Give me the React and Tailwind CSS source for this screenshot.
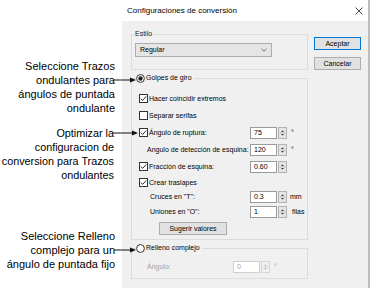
import React from 'react';

function Arrow({ x, y, w }) {
  return (
    <svg className="absolute" style={{ left: x, top: y - 4 }} width={w} height="8" viewBox={`0 0 ${w} 8`}>
      <line x1="0" y1="4" x2={w - 4} y2="4" stroke="#111" strokeWidth="1" />
      <polygon points={`${w - 6},1.5 ${w},4 ${w - 6},6.5`} fill="#111" />
    </svg>
  );
}

function Check({ checked }) {
  return (
    <svg width="9" height="9" viewBox="0 0 9 9" className="shrink-0">
      <rect x="0.5" y="0.5" width="8" height="8" fill="#fff" stroke="#333" />
      {checked && <polyline points="1.8,4.6 3.6,6.4 7.2,2.5" fill="none" stroke="#222" strokeWidth="1" />}
    </svg>
  );
}

function Radio({ checked }) {
  return (
    <svg width="9" height="9" viewBox="0 0 9 9" className="shrink-0">
      <circle cx="4.5" cy="4.5" r="3.9" fill="#fff" stroke="#333" />
      {checked && <circle cx="4.5" cy="4.5" r="2.2" fill="#222" />}
    </svg>
  );
}

function Spin({ value, disabled }) {
  return (
    <div className="flex h-[12px]">
      <div className={`w-[27px] h-[12px] bg-white border pl-[3px] flex items-center ${disabled ? 'border-[#cfcfcf] text-[#a0a0a0]' : 'border-[#9a9a9a] text-black'}`}>
        {value}
      </div>
      <div className={`ml-[1px] w-[9px] h-[12px] border ${disabled ? 'border-[#d6d6d6] bg-[#f0f0f0]' : 'border-[#b4b4b4] bg-[#e6e6e6]'}`}>
        <svg width="7" height="10" viewBox="0 0 7 10">
          <polygon points="2,4 3.5,2.5 5,4" fill={disabled ? '#b0b0b0' : '#333'} />
          <line x1="0" y1="5" x2="7" y2="5" stroke={disabled ? '#dcdcdc' : '#c4c4c4'} />
          <polygon points="2,6 3.5,7.5 5,6" fill={disabled ? '#b0b0b0' : '#333'} />
        </svg>
      </div>
    </div>
  );
}

export default function App() {
  return (
    <div className="relative w-[386px] h-[305px] bg-white overflow-hidden font-['Liberation_Sans',Arial,sans-serif] text-black">
      {/* dialog */}
      <div className="ml-[122px] w-[248px] flex flex-col border-r-2 border-[#bdbdbd]">
        <div className="h-[21px] bg-white flex items-center justify-between pl-[5px] pr-[5px] text-[8px]">
          <span>Configuraciones de conversión</span>
          <svg width="8" height="8" viewBox="0 0 8 8">
            <path d="M0.5 0.5 L7.5 7.5 M7.5 0.5 L0.5 7.5" stroke="#333" strokeWidth="0.9" />
          </svg>
        </div>

        <div className="h-[267px] bg-[#f0f0f0] flex pl-[9px] pt-[8px] gap-[6px] text-[7px] leading-[10px]">
          <div className="w-[177px] flex flex-col">
            <fieldset className="border border-[#dcdcdc] pb-[12px]">
              <legend className="ml-[2px] px-[1px] text-[#222]">Estilo</legend>
              <div className="mt-[4px] ml-[3px] w-[137px] h-[14px] bg-[#e5e5e5] border border-[#adadad] flex items-center justify-between pl-[4px] pr-[4px]">
                <span>Regular</span>
                <svg width="6" height="4" viewBox="0 0 6 4">
                  <polyline points="0.5,0.8 3,3.2 5.5,0.8" fill="none" stroke="#555" strokeWidth="0.8" />
                </svg>
              </div>
            </fieldset>

            <fieldset className="mt-[3px] border border-[#dcdcdc] pb-[4px]">
              <legend className="ml-[4px] pr-[2px] flex items-center gap-[1px]">
                <Radio checked />
                <span>Golpes de giro</span>
              </legend>
              <div className="pt-[7px] flex flex-col">
                <div className="h-[17px] flex items-center pl-[7px] gap-[1px]">
                  <Check checked />
                  <span>Hacer coincidir extremos</span>
                </div>
                <div className="h-[17px] flex items-center pl-[7px] gap-[1px]">
                  <Check />
                  <span>Separar serifas</span>
                </div>
                <div className="h-[17px] flex items-center pl-[7px]">
                  <div className="w-[111px] flex items-center gap-[1px]">
                    <Check checked />
                    <span>Ángulo de ruptura:</span>
                  </div>
                  <Spin value="75" />
                  <span className="ml-[4px]">°</span>
                </div>
                <div className="h-[17px] flex items-center pl-[15px]">
                  <span className="w-[103px] whitespace-nowrap">Angulo de detección de esquina:</span>
                  <Spin value="120" />
                  <span className="ml-[4px]">°</span>
                </div>
                <div className="h-[17px] flex items-center pl-[7px]">
                  <div className="w-[111px] flex items-center gap-[1px]">
                    <Check checked />
                    <span>Fracción de esquina:</span>
                  </div>
                  <Spin value="0.60" />
                </div>
                <div className="h-[15px] flex items-center pl-[7px] gap-[1px]">
                  <Check checked />
                  <span>Crear traslapes</span>
                </div>
                <div className="h-[14px] flex items-center pl-[18px]">
                  <span className="w-[100px]">Cruces en "T":</span>
                  <Spin value="0.3" />
                  <span className="ml-[3px]">mm</span>
                </div>
                <div className="h-[16px] flex items-center pl-[18px]">
                  <span className="w-[100px]">Uniones en "O":</span>
                  <Spin value="1" />
                  <span className="ml-[5px]">filas</span>
                </div>
                <div className="mt-[2px] ml-[27px] w-[68px] h-[13px] bg-[#e1e1e1] border border-[#adadad] flex items-center justify-center">
                  Sugerir valores
                </div>
              </div>
            </fieldset>

            <fieldset className="mt-[3px] border border-[#dcdcdc] pb-[5px]">
              <legend className="ml-[4px] pr-[2px] flex items-center gap-[1px]">
                <Radio />
                <span>Relleno complejo</span>
              </legend>
              <div className="pt-[8px] h-[20px] flex items-center pl-[15px] text-[#a0a0a0]">
                <span className="w-[86px]">Ángulo:</span>
                <Spin value="0" disabled />
                <span className="ml-[4px]">°</span>
              </div>
            </fieldset>
          </div>

          <div className="w-[47px] flex flex-col pt-[8px] gap-[7px]">
            <div className="h-[13px] bg-[#e1e1e1] border border-[#0078d7] flex items-center justify-center">Aceptar</div>
            <div className="h-[13px] bg-[#e1e1e1] border border-[#adadad] flex items-center justify-center">Cancelar</div>
          </div>
        </div>
      </div>

      {/* callouts */}
      <div className="absolute right-[271px] top-[59px] whitespace-nowrap text-right text-[11px] leading-[14px]">
        <div>Seleccione Trazos</div>
        <div>ondulantes para</div>
        <div>ángulos de puntada</div>
        <div>ondulante</div>
      </div>
      <Arrow x={114} y={80} w={22} />

      <div className="absolute right-[272px] top-[126px] whitespace-nowrap text-right text-[10.8px] leading-[14px]">
        <div>Optimizar la</div>
        <div>configuracion de</div>
        <div>conversion para Trazos</div>
        <div>ondulantes</div>
      </div>
      <Arrow x={113} y={133} w={25} />

      <div className="absolute right-[271px] top-[229px] whitespace-nowrap text-right text-[11px] leading-[14px]">
        <div>Seleccione Relleno</div>
        <div>complejo para un</div>
        <div>ángulo de puntada fijo</div>
      </div>
      <Arrow x={114} y={250} w={22} />
    </div>
  );
}
